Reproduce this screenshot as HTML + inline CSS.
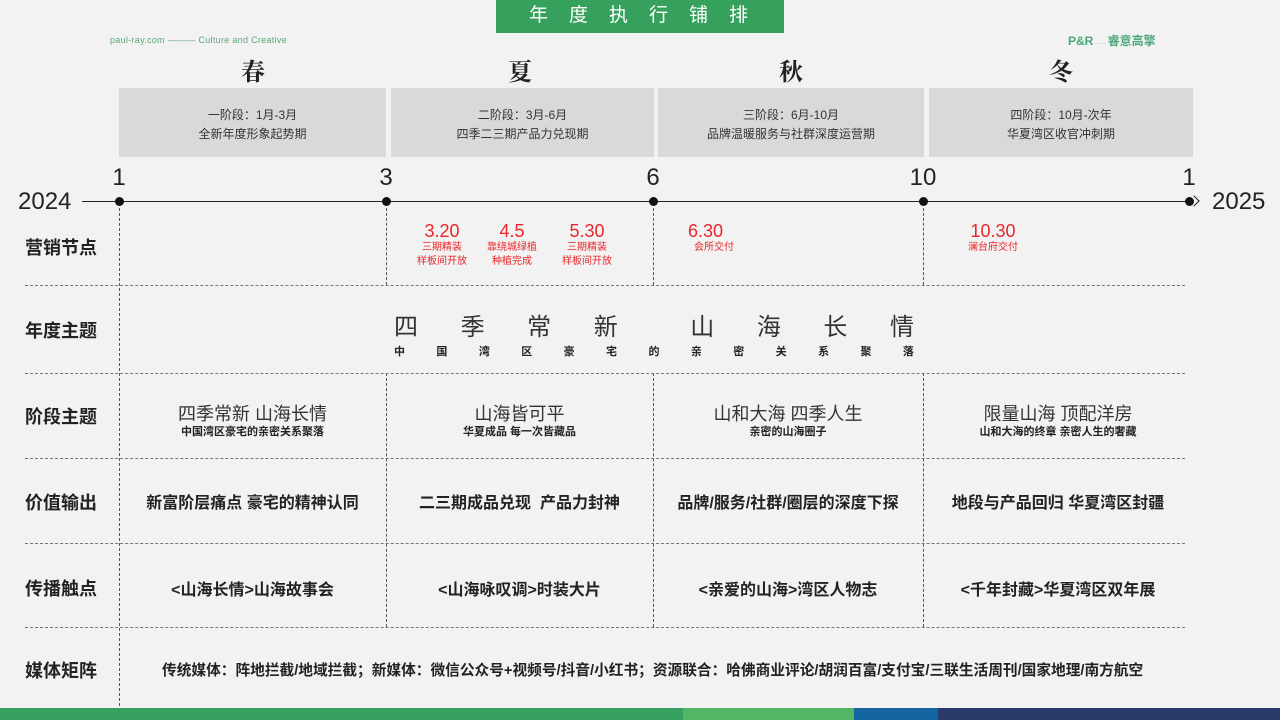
<!DOCTYPE html>
<html><head><meta charset="utf-8"><style>
*{margin:0;padding:0;box-sizing:border-box}
body{width:1280px;height:720px;background:#f2f2f2;position:relative;overflow:hidden;font-family:"Liberation Sans","Noto Sans CJK SC",sans-serif;color:#222}
.a{position:absolute}
.c{text-align:center}
.vl{position:absolute;width:0;border-left:1px dashed #555}
.hl{position:absolute;left:25px;width:1160px;height:0;border-top:1px dashed #777}
.lab{position:absolute;left:25px;font-size:18px;font-weight:bold;color:#222}
.stage{position:absolute;top:88px;height:69px;background:#d9d9d9;text-align:center;font-size:12px;color:#333;padding-top:18px;line-height:19px}
.season{position:absolute;top:52px;font-family:"Noto Serif CJK SC",serif;font-size:24px;font-weight:bold;width:60px;text-align:center}
.num{position:absolute;top:164px;font-size:24px;color:#222;text-align:center;width:40px}
.dot{position:absolute;top:197px;width:9px;height:9px;border-radius:50%;background:#111}
.red{position:absolute;color:#e8262c;text-align:center;width:80px}
.red b{display:block;font-weight:normal;font-size:18px;line-height:20px}
.red i{display:block;font-style:normal;font-size:10px;line-height:14px}
.cell{position:absolute;text-align:center}
.big{font-size:18px;line-height:22px;color:#333}
.sm{font-size:11px;font-weight:bold;line-height:15px}
.val{font-size:16px;font-weight:bold}
</style></head><body>
<div class="a c" style="left:496px;top:0;width:288px;height:33px;background:#36a15d;color:#fff;font-size:19px;line-height:31px;letter-spacing:21px;padding-left:18px">年度执行铺排</div>
<div class="a" style="left:110px;top:35px;font-size:9px;color:#5aa878;letter-spacing:0.3px">paul-ray.com ――― Culture and Creative</div>
<div class="a" style="left:1068px;top:32px;font-size:12px;color:#4aa878;font-weight:bold">P&amp;R<span style="font-size:4px;font-weight:normal"> ········· </span> 睿意高擎</div>
<div class="season" style="left:223px">春</div>
<div class="season" style="left:490px">夏</div>
<div class="season" style="left:761px">秋</div>
<div class="season" style="left:1031px">冬</div>
<div class="stage" style="left:119px;width:267px">一阶段：1月-3月<br>全新年度形象起势期</div>
<div class="stage" style="left:391px;width:263px">二阶段：3月-6月<br>四季二三期产品力兑现期</div>
<div class="stage" style="left:658px;width:266px">三阶段：6月-10月<br>品牌温暖服务与社群深度运营期</div>
<div class="stage" style="left:929px;width:264px">四阶段：10月-次年<br>华夏湾区收官冲刺期</div>
<div class="num" style="left:99px">1</div>
<div class="num" style="left:366px">3</div>
<div class="num" style="left:633px">6</div>
<div class="num" style="left:903px">10</div>
<div class="num" style="left:1169px">1</div>
<div class="a" style="left:18px;top:188px;font-size:24px">2024</div>
<div class="a" style="left:1212px;top:188px;font-size:24px">2025</div>
<div class="a" style="left:82px;top:201px;width:1110px;height:1px;background:#222"></div>
<div class="a" style="left:1190px;top:197px;width:8px;height:8px;border-top:1px solid #222;border-right:1px solid #222;transform:rotate(45deg)"></div>
<div class="dot" style="left:115px"></div><div class="dot" style="left:382px"></div><div class="dot" style="left:649px"></div><div class="dot" style="left:919px"></div><div class="dot" style="left:1185px"></div>
<div class="vl" style="left:119px;top:208px;height:498px"></div>
<div class="vl" style="left:386px;top:208px;height:77px"></div><div class="vl" style="left:386px;top:373px;height:254px"></div>
<div class="vl" style="left:653px;top:208px;height:77px"></div><div class="vl" style="left:653px;top:373px;height:254px"></div>
<div class="vl" style="left:923px;top:208px;height:77px"></div><div class="vl" style="left:923px;top:373px;height:254px"></div>
<div class="hl" style="top:285px"></div><div class="hl" style="top:373px"></div><div class="hl" style="top:458px"></div><div class="hl" style="top:543px"></div><div class="hl" style="top:627px"></div>
<div class="lab" style="top:234px">营销节点</div>
<div class="lab" style="top:317px">年度主题</div>
<div class="lab" style="top:403px">阶段主题</div>
<div class="lab" style="top:489px">价值输出</div>
<div class="lab" style="top:575px">传播触点</div>
<div class="lab" style="top:657px">媒体矩阵</div>
<div class="red" style="left:402px;top:221px"><b>3.20</b><i>三期精装<br>样板间开放</i></div>
<div class="red" style="left:472px;top:221px"><b>4.5</b><i>靠绕城绿植<br>种植完成</i></div>
<div class="red" style="left:547px;top:221px"><b>5.30</b><i>三期精装<br>样板间开放</i></div>
<div class="red" style="left:688px;top:221px;width:50px;text-align:left"><b>6.30</b><i style="padding-left:6px">会所交付</i></div>
<div class="red" style="left:953px;top:221px"><b>10.30</b><i>澜台府交付</i></div>
<div class="a" style="left:394px;top:307px;width:520px;display:flex;justify-content:space-between;font-size:24px;color:#333"><span>四</span><span>季</span><span>常</span><span>新</span><span style="margin-left:30px">山</span><span>海</span><span>长</span><span>情</span></div>
<div class="a" style="left:394px;top:343px;width:520px;display:flex;justify-content:space-between;font-size:11px;font-weight:bold"><span>中</span><span>国</span><span>湾</span><span>区</span><span>豪</span><span>宅</span><span>的</span><span>亲</span><span>密</span><span>关</span><span>系</span><span>聚</span><span>落</span></div>
<div class="cell" style="left:119px;width:267px;top:403px"><div class="big">四季常新 山海长情</div><div class="sm">中国湾区豪宅的亲密关系聚落</div></div>
<div class="cell" style="left:386px;width:267px;top:403px"><div class="big">山海皆可平</div><div class="sm">华夏成品 每一次皆藏品</div></div>
<div class="cell" style="left:653px;width:270px;top:403px"><div class="big">山和大海 四季人生</div><div class="sm">亲密的山海圈子</div></div>
<div class="cell" style="left:923px;width:270px;top:403px"><div class="big">限量山海 顶配洋房</div><div class="sm">山和大海的终章 亲密人生的奢藏</div></div>
<div class="cell val" style="left:119px;width:267px;top:489px">新富阶层痛点 豪宅的精神认同</div>
<div class="cell val" style="left:386px;width:267px;top:489px">二三期成品兑现&nbsp; 产品力封神</div>
<div class="cell val" style="left:653px;width:270px;top:489px">品牌/服务/社群/圈层的深度下探</div>
<div class="cell val" style="left:923px;width:270px;top:489px">地段与产品回归 华夏湾区封疆</div>
<div class="cell val" style="left:119px;width:267px;top:576px">&lt;山海长情&gt;山海故事会</div>
<div class="cell val" style="left:386px;width:267px;top:576px">&lt;山海咏叹调&gt;时装大片</div>
<div class="cell val" style="left:653px;width:270px;top:576px">&lt;亲爱的山海&gt;湾区人物志</div>
<div class="cell val" style="left:923px;width:270px;top:576px">&lt;千年封藏&gt;华夏湾区双年展</div>
<div class="a" style="left:162px;top:659px;font-size:14.7px;font-weight:bold;white-space:nowrap">传统媒体：阵地拦截/地域拦截；新媒体：微信公众号+视频号/抖音/小红书；资源联合：哈佛商业评论/胡润百富/支付宝/三联生活周刊/国家地理/南方航空</div>
<div class="a" style="left:0;top:708px;width:683px;height:12px;background:#36a160"></div>
<div class="a" style="left:683px;top:708px;width:171px;height:12px;background:#55b567"></div>
<div class="a" style="left:854px;top:708px;width:84px;height:12px;background:#1565a0"></div>
<div class="a" style="left:938px;top:708px;width:342px;height:12px;background:#2a3b6b"></div>
</body></html>
